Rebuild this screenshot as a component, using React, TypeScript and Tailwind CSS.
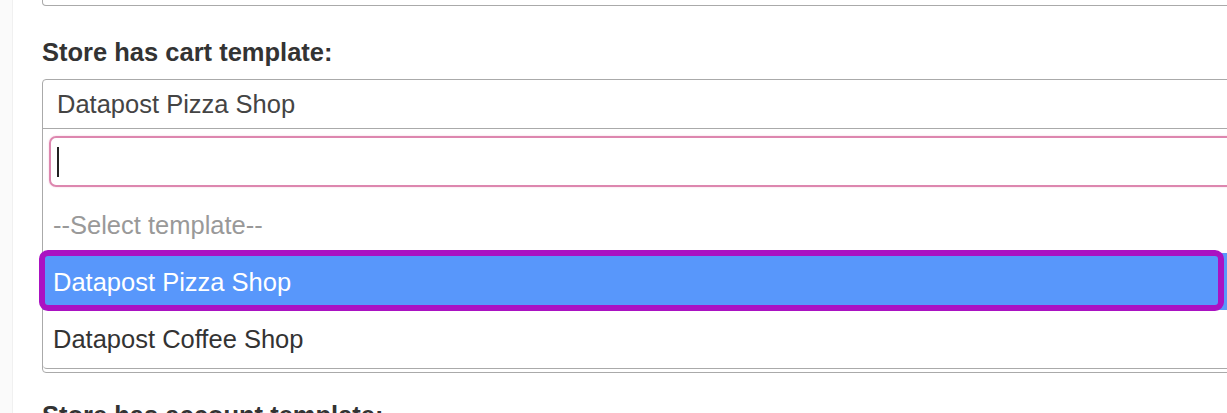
const options = [
  { id: 'none', label: '--Select template--', placeholder: true },
  { id: 'pizza', label: 'Datapost Pizza Shop', highlighted: true },
  { id: 'coffee', label: 'Datapost Coffee Shop' },
];

function TemplateSelect() {
  return (
    <div className="w-[1230px] rounded-[4px] border border-[#aaa] bg-white pb-[3px]">
      {/* current value */}
      <div className="h-[49px] border-b border-[#aaa] pl-[14px] text-[25.5px] leading-[48px] text-[#444]">
        Datapost Pizza Shop
      </div>

      {/* open dropdown */}
      <div className="rounded-b-[4px] border-b border-[#aaa] pb-[1px]">
        <div className="pt-[7px] pb-[9px] pl-[6px]">
          <div className="flex h-[51px] items-center rounded-[7px] border-2 border-[#dd87af] pl-[6px] shadow-[0_0_2px_#f4c4da]">
            <span className="h-[30px] w-[2px] bg-[#222]" />
          </div>
        </div>

        <ul>
          {options.map((o) => (
            <li
              key={o.id}
              className={
                o.highlighted
                  ? 'relative h-[57px] bg-[#5897fb] pl-[10px] text-[25.5px] leading-[58px] text-white'
                  : o.placeholder
                    ? 'h-[57px] pl-[10px] text-[25.5px] leading-[58px] text-[#999]'
                    : 'h-[57px] pl-[10px] text-[25.5px] leading-[58px] text-[#333]'
              }
            >
              {o.label}
              {o.highlighted && (
                <span className="absolute left-[-4px] top-[-3px] h-[61px] w-[1185px] rounded-[9px] border-[6px] border-[#aa12c2]" />
              )}
            </li>
          ))}
        </ul>
      </div>
    </div>
  );
}

export default function App() {
  return (
    <div className="flex h-[413px] w-[1227px] overflow-hidden bg-white font-['Liberation_Sans',Arial,sans-serif]">
      <div className="w-[13px] shrink-0 border-r border-[#f0f0f0] bg-[#fafafa]" />

      <div className="shrink-0 pl-[29px]">
        {/* tail of the previous field */}
        <div className="h-[6px] w-[1230px] rounded-b-[4px] border-x border-b border-[#aaa]" />

        <label className="mt-[32px] block text-[25.5px] font-bold leading-[29px] text-[#333]">
          Store has cart template:
        </label>
        <div className="mt-[12px]">
          <TemplateSelect />
        </div>

        <label className="mt-[28px] block text-[25.5px] font-bold leading-[29px] text-[#333]">
          Store has account template:
        </label>
      </div>
    </div>
  );
}
